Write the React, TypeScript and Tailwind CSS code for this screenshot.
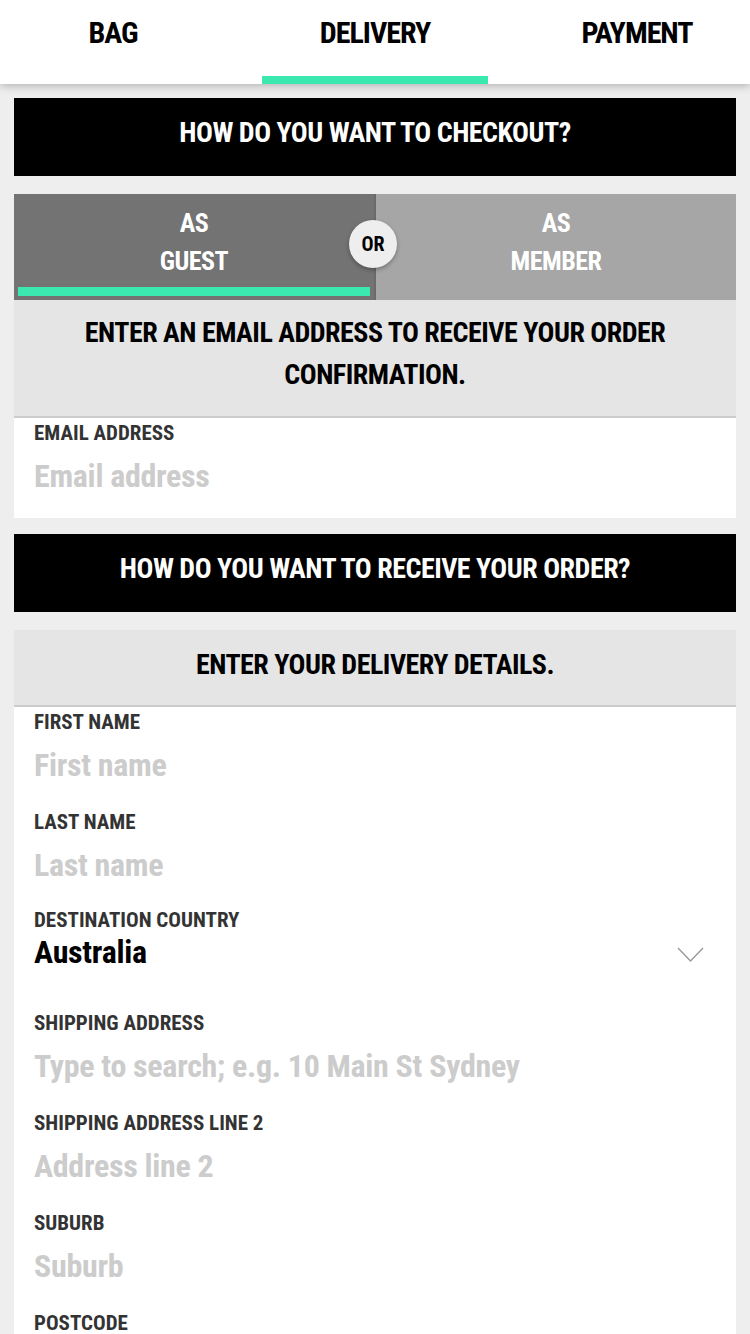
const tabs = [
  { label: "BAG", active: false },
  { label: "DELIVERY", active: true },
  { label: "PAYMENT", active: false },
];

function Field({ label, placeholder }: { label: string; placeholder: string }) {
  return (
    <div className="flex h-[100px] flex-col px-[20px]">
      <label className="mt-[2px] text-[21px] leading-[26px] font-bold text-[#333333]">{label}</label>
      <input
        className="mt-[9px] h-[42px] w-full bg-transparent text-[32px] leading-[42px] font-bold tracking-[-0.3px] text-black outline-none placeholder:text-[#cccccc]"
        placeholder={placeholder}
        type="text"
      />
    </div>
  );
}

function BlackBar({ children }: { children: string }) {
  return (
    <div className="flex h-[78px] items-center justify-center bg-black pb-[8px] text-[28px] font-bold tracking-[-0.5px] text-white">
      {children}
    </div>
  );
}

export default function App() {
  return (
    <div className="min-h-screen bg-[#eeeeee] [font-family:'Roboto_Condensed','Open_Sans_Condensed',sans-serif]">
      <header className="relative z-10 flex h-[84px] justify-between bg-white shadow-[0_2px_8px_rgba(0,0,0,0.25)]">
        {tabs.map((tab) => (
          <div className="flex w-[226px] flex-col items-center" key={tab.label}>
            <span className="mt-[14px] text-[30px] leading-[38px] font-bold tracking-[-1px] text-black">{tab.label}</span>
            <div className={`mt-auto h-[8px] w-full ${tab.active ? "bg-[#3ae8b0]" : ""}`} />
          </div>
        ))}
      </header>

      <main className="px-[14px] pt-[14px]">
        <BlackBar>HOW DO YOU WANT TO CHECKOUT?</BlackBar>

        <div className="relative mt-[18px] flex h-[106px]">
          <button className="flex w-[360px] flex-col items-center bg-[#737373] pt-[10px] text-[26px] leading-[38px] font-bold tracking-[-0.5px] text-white" type="button">
            <span>AS</span>
            <span>GUEST</span>
            <div className="mt-auto mb-[4px] h-[9px] w-[352px] bg-[#3ae8b0]" />
          </button>
          <div className="w-[2px] bg-[#6a6a6a]" />
          <button className="flex w-[360px] flex-col items-center bg-[#a6a6a6] pt-[10px] text-[26px] leading-[38px] font-bold tracking-[-0.5px] text-white" type="button">
            <span>AS</span>
            <span>MEMBER</span>
          </button>
          <div className="absolute top-[26px] left-[335px] flex h-[48px] w-[48px] items-center justify-center rounded-full bg-[#eeeeee] text-[20px] font-bold text-black shadow-[0_2px_4px_rgba(0,0,0,0.3)]">
            OR
          </div>
        </div>

        <div className="flex h-[118px] flex-col items-center justify-center border-b-2 border-[#cccccc] bg-[#e5e5e5] pb-[8px] text-center text-[28px] leading-[42px] font-bold tracking-[-0.5px] text-black">
          <span>ENTER AN EMAIL ADDRESS TO RECEIVE YOUR ORDER</span>
          <span>CONFIRMATION.</span>
        </div>
        <div className="bg-white">
          <Field label="EMAIL ADDRESS" placeholder="Email address" />
        </div>

        <div className="mt-[16px]">
          <BlackBar>HOW DO YOU WANT TO RECEIVE YOUR ORDER?</BlackBar>
        </div>

        <div className="mt-[18px] flex h-[77px] items-center justify-center border-b-2 border-[#cccccc] bg-[#e5e5e5] pb-[6px] text-[28px] font-bold tracking-[-0.5px] text-black">
          ENTER YOUR DELIVERY DETAILS.
        </div>
        <div className="bg-white pb-[20px]">
          <Field label="FIRST NAME" placeholder="First name" />
          <Field label="LAST NAME" placeholder="Last name" />
          <div className="flex h-[96px] flex-col px-[20px]">
            <label className="text-[21px] leading-[26px] font-bold text-[#333333]">DESTINATION COUNTRY</label>
            <div className="flex items-center justify-between">
              <span className="text-[32px] leading-[38px] font-bold tracking-[-0.3px] text-black">Australia</span>
              <svg className="mt-[6px] mr-[12px]" fill="none" height="16" viewBox="0 0 27 16" width="27">
                <polyline points="1,1 13.5,14 26,1" stroke="#999999" strokeWidth="1.4" />
              </svg>
            </div>
          </div>
          <div className="h-[5px]" />
          <Field label="SHIPPING ADDRESS" placeholder="Type to search; e.g. 10 Main St Sydney" />
          <Field label="SHIPPING ADDRESS LINE 2" placeholder="Address line 2" />
          <Field label="SUBURB" placeholder="Suburb" />
          <Field label="POSTCODE" placeholder="Postcode" />
        </div>
      </main>
    </div>
  );
}
